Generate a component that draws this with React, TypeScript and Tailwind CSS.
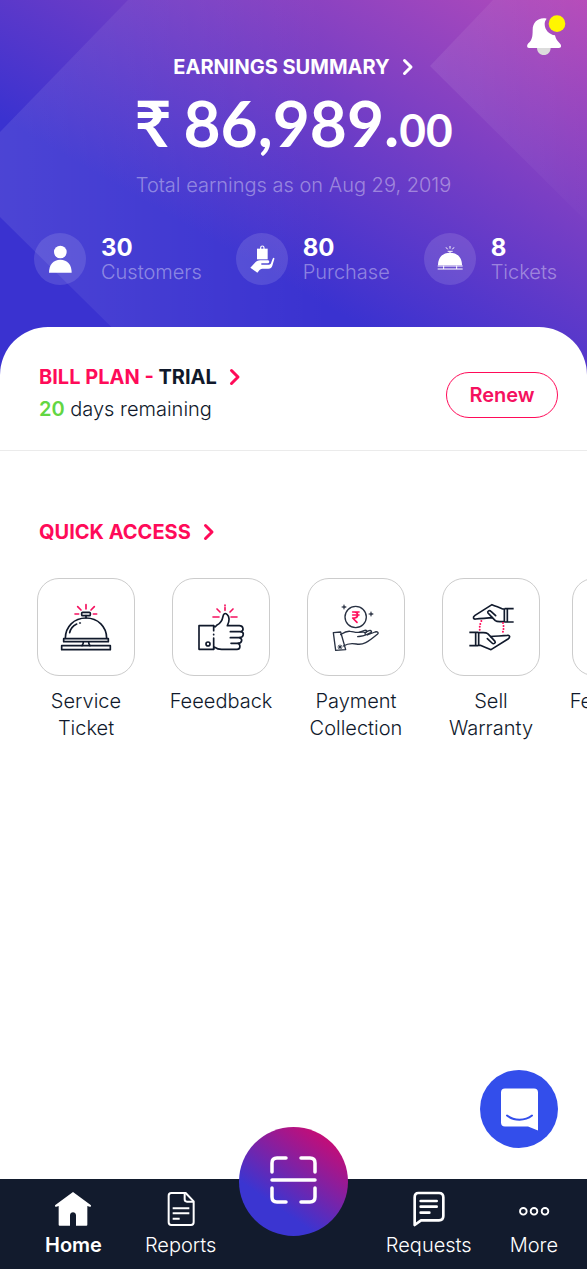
import type { ReactNode } from "react";

function Chevron() {
  return (
    <svg viewBox="0 0 12 18" className="h-[18px] w-3" fill="none" stroke="currentColor" strokeWidth="3" aria-hidden="true">
      <path d="M2.5 2.5 9 9l-6.500 6.500" strokeLinecap="round" strokeLinejoin="round" />
    </svg>
  );
}

function HeaderBackdrop() {
  return (
    <svg viewBox="0 0 587 375" preserveAspectRatio="none" className="absolute inset-0 h-full w-full" aria-hidden="true">
      <defs>
        <linearGradient id="sheenLeft" x1="0" x2="1" y1="0" y2="0">
          <stop offset="0" stopColor="#fff" stopOpacity="0.09" />
          <stop offset="1" stopColor="#fff" stopOpacity="0" />
        </linearGradient>
        <linearGradient id="sheenRight" x1="0" x2="1" y1="0" y2="0">
          <stop offset="0" stopColor="#fff" stopOpacity="0.08" />
          <stop offset="1" stopColor="#fff" stopOpacity="0.01" />
        </linearGradient>
      </defs>
      <path d="M128 0H330V375H160L0 217V132Z" fill="url(#sheenLeft)" />
      <path d="M493 0 430 66 587 222V0Z" fill="url(#sheenRight)" />
    </svg>
  );
}

function NotificationBell() {
  return (
    <svg viewBox="78 45 120 120" className="size-10" aria-hidden="true">
      <path d="M111 143h41c0 13-9 22-20.500 22S111 156 111 143Z" fill="#dcdcdc" />
      <path
        d="M140 56c-3-1-6-1-9-1-20 0-33 15-33 34 0 22-2 31-13 41-5 5-5 14 2 14h90c8 0 8-9 2-14-8-8-12-14-14-24-17-2-31-16-31-34 0-6 2-11 6-16Z"
        fill="#fff"
      />
      <circle cx="171" cy="71" r="25" fill="#fff500" />
    </svg>
  );
}

function CustomerIcon() {
  return (
    <svg viewBox="41 40 156 156" className="size-full" fill="#fff" aria-hidden="true">
      <circle cx="120" cy="97" r="19" />
      <path d="M86 159c0-24 13-39 34-39s34 15 34 39Z" />
    </svg>
  );
}

function PurchaseIcon() {
  return (
    <svg viewBox="645 40 156 156" className="size-full" fill="#fff" aria-hidden="true">
      <path d="M719 90v-6a5 5 0 0 1 10 0v6" fill="none" stroke="#fff" strokeWidth="3.500" />
      <path d="M708 87h32v32h-32Z" />
      <path d="m688 144 16-17c5-5 12-5 19-5h18c5 0 5 9 0 9h-20v4h22c5 0 7-3 8-7l4-11c2-4 6-4 5 1l-6 20c-2 6-5 9-12 9h-18c-5 0-8 3-10 6l-5 6Z" />
    </svg>
  );
}

function TicketIcon() {
  return (
    <svg viewBox="377 40 156 156" className="size-full" fill="none" stroke="#fff" strokeWidth="4" aria-hidden="true">
      <path d="M419 137c0-25 15-38 36-38s36 13 36 38Z" fill="#fff" stroke="none" />
      <path d="M448 95h15M455 95v6M455 79v8M443 83l5 6M467 83l-5 6" strokeWidth="3" />
      <path d="M418 139h75M418 148h75M436 138v10M475 138v10" strokeWidth="3" />
    </svg>
  );
}

function ServiceTicketIcon() {
  return (
    <svg viewBox="24 27 288 288" className="size-full" fill="none" stroke="#10192b" strokeWidth="5" strokeLinecap="round" strokeLinejoin="round" aria-hidden="true">
      <path d="M106 205c0-35 26-61 62-61s62 26 62 61" />
      <path d="M101 206h134v9H101ZM95 227h146v12H95Z" />
      <path d="M160 216c0 5-2 9-4 11M176 216c0 5 2 9 4 11" />
      <rect x="155" y="127" width="26" height="10" rx="3" />
      <path d="M168 137v7M119 188c2-11 9-20 21-26M149 159h2" />
      <path d="M168 104v13M143 110l10 10M193 110l-10 10M135 132h11M190 132h10" stroke="#f5115f" />
    </svg>
  );
}

function FeedbackIcon() {
  return (
    <svg viewBox="429 27 288 288" className="size-full" fill="none" stroke="#10192b" strokeWidth="5" strokeLinecap="round" strokeLinejoin="round" aria-hidden="true">
      <path d="M551 167h-44v71h44c0-5 1-8 4-6 7 6 14 6 20 6h46c11 0 11-14 3-18 12 0 15-13 5-17 12-1 15-15 4-18 10-3 7-18-5-18h-36c7-13 7-28-1-34-7-6-11 0-12 6-2 12-9 22-19 27-4 3-4 8-9 1Z" />
      <path d="M551 167v15M551 193v1M551 204v34M601 185h30M601 203h29M603 220h22" />
      <circle cx="534" cy="222" r="6" />
      <path d="M585 105v2M585 113v8M561 117l9 9M609 117l-9 9M549 141h18M603 141h18" stroke="#f5115f" />
    </svg>
  );
}

function PaymentIcon() {
  return (
    <svg viewBox="56 27 288 288" className="size-full" fill="none" stroke="#283142" strokeWidth="4" strokeLinecap="round" strokeLinejoin="round" aria-hidden="true">
      <circle cx="199" cy="141" r="32" />
      <path d="M190 126h19M190 135h19M190 126h5c13 0 13 18 0 18h-5l13 13" stroke="#ff0b59" strokeWidth="5" />
      <path d="M164 105v12M158 111h12M245 126v12M239 132h12" strokeWidth="3" />
      <circle cx="164" cy="111" r="3" strokeWidth="2" />
      <circle cx="245" cy="132" r="3" strokeWidth="2" />
      <path d="m132 188 22-2 15 53-30 2Z" />
      <path d="M154 194c9-6 16-12 29-10 10 1 14 4 26 3 12-2 20-1 19 6 0 6-12 5-23 7" />
      <path d="M162 228c13-8 24-9 39-6 20 4 34-5 63-29 6-6 0-9-7-7l-23 9M209 187l17-6c6-1 10 3 3 7M228 187l11-5c7-2 10 3 5 6l-15 7" />
      <path d="M152 225v12M146 231h12M148 227l8 8M156 227l-8 8" strokeWidth="3" />
    </svg>
  );
}

function WarrantyHand() {
  return (
    <g fill="none" stroke="#111a2c" strokeWidth="5" strokeLinecap="round" strokeLinejoin="round">
      <path d="M645 117h-5c-13-5-21-9-32-13l-51 32c-8 6-5 12 2 11 18-2 36-2 50-4l9 9c4 3 7 3 13 3h14" />
      <path d="m619 137-14-13c-5-5-12 0-9 5l13 14" />
      <path d="M645 116v40M654 116v40M646 116h27M646 156h27" strokeLinecap="butt" />
    </g>
  );
}

function WarrantyIcon() {
  return (
    <svg viewBox="461 27 288 288" className="size-full" aria-hidden="true">
      <WarrantyHand />
      <g transform="rotate(180 606.500 171.500)">
        <WarrantyHand />
      </g>
      <path d="M576 153c-5 11-6 21-4 33M641 159c3 12 2 22-3 35" fill="none" stroke="#ff0b59" strokeWidth="6" strokeLinecap="round" strokeDasharray="0 9" />
    </svg>
  );
}

function HomeIcon() {
  return (
    <svg viewBox="77 32 108 108" className="size-9" fill="#fff" aria-hidden="true">
      <path d="M131 35 78 74c-4 4-1 6 3 5l7-2v56c0 2 1 3 3 3h31v-31c0-12 18-12 18 0v31h31c2 0 3-1 3-3V77l7 2c4 1 7-1 3-5Z" />
    </svg>
  );
}

function ReportsIcon() {
  return (
    <svg viewBox="393 32 108 108" className="size-9" fill="none" stroke="#fff" strokeWidth="6" strokeLinejoin="round" aria-hidden="true">
      <path d="M418 38h43l24 25v63c0 6-2 8-8 8h-59c-6 0-8-2-8-8V46c0-6 2-8 8-8Z" />
      <path d="M458 39v18c0 5 2 7 7 7h19" />
      <path d="M422 84h50M422 99h50M422 115h21" />
    </svg>
  );
}

function RequestsIcon() {
  return (
    <svg viewBox="103 32 108 108" className="size-9" fill="none" stroke="#fff" strokeWidth="8" strokeLinejoin="round" aria-hidden="true">
      <path d="M125 38h62c9 0 13 4 13 13v56c0 9-4 13-13 13h-54l-19 14V51c0-9 3-13 11-13Z" />
      <path d="M132 62h48M132 79h48M132 97h26" strokeLinecap="round" />
    </svg>
  );
}

function MoreIcon() {
  return (
    <svg viewBox="409 32 108 108" className="size-9" fill="none" stroke="#fff" strokeWidth="5.500" aria-hidden="true">
      <circle cx="431" cy="93" r="10" />
      <circle cx="463" cy="93" r="10" />
      <circle cx="496" cy="93" r="10" />
    </svg>
  );
}

function ScanIcon() {
  return (
    <svg viewBox="0 0 109 109" className="size-full" fill="none" stroke="#fff" strokeWidth="3.500" strokeLinecap="round" aria-hidden="true">
      <path d="M33 45v-9c0-4 2-5 5-5h9M62 31h9c4 0 5 2 5 5v9M76 61v9c0 4-2 5-5 5h-9M47 75h-9c-4 0-5-2-5-5v-9M33 53h43" />
    </svg>
  );
}

function ChatIcon() {
  return (
    <svg viewBox="0 0 78 78" className="size-full" aria-hidden="true">
      <path d="M25 18.500h29a4 4 0 0 1 4 4V60.500l-10-4H25a4 4 0 0 1-4-4v-30a4 4 0 0 1 4-4Z" fill="#fff" />
      <path d="M27 45.500c7 5.500 18 5.500 25 0" fill="none" stroke="#334eeb" strokeWidth="2" strokeLinecap="round" />
    </svg>
  );
}

function Stat({ icon, value, label }: { icon: ReactNode; value: string; label: string }) {
  return (
    <a href="#" className="flex items-center gap-[15px]">
      <span className="size-[52px] rounded-full bg-white/12">{icon}</span>
      <span className="flex flex-col">
        <span className="text-[24px] leading-[25px] font-bold">{value}</span>
        <span className="text-[20px] leading-6 font-light text-white/40">{label}</span>
      </span>
    </a>
  );
}

function Tile({ icon, label }: { icon?: ReactNode; label: string }) {
  return (
    <a href="#" className="flex w-[98px] shrink-0 flex-col items-center gap-3">
      <span className="size-[98px] rounded-[22px] border border-[#cccccc]">{icon}</span>
      <span className="text-center text-[20px] leading-[27px] font-light text-[#10192b]">{label}</span>
    </a>
  );
}

function NavItem({ icon, label, active = false }: { icon: ReactNode; label: string; active?: boolean }) {
  return (
    <a href="#" aria-current={active ? "page" : undefined} className="flex flex-col items-center gap-[6px]">
      {icon}
      <span className={active ? "text-[20px] leading-6 font-semibold" : "text-[20px] leading-6 font-light"}>{label}</span>
    </a>
  );
}

export default function App() {
  return (
    <div className="flex min-h-screen flex-col overflow-x-hidden bg-white font-['Inter','Liberation_Sans',sans-serif] text-[#10192b]">
      <header className="relative bg-[linear-gradient(30deg,#3a32d0_0%,#3a32d0_36%,#b64bb9_100%)] pt-[53px] pb-[90px] text-white">
        <HeaderBackdrop />
        <button type="button" aria-label="Notifications" className="absolute top-[15px] right-[21px]">
          <NotificationBell />
        </button>
        <div className="relative flex flex-col items-center">
          <a href="#" className="flex items-center gap-3 text-[20px] leading-7 font-bold">
            <h1>EARNINGS SUMMARY</h1>
            <Chevron />
          </a>
          <p className="mt-[10px] flex h-16 items-baseline font-['Lato','Inter',sans-serif] text-[64px] leading-[64px] font-bold">
            <span className="mr-3">₹</span>
            <span>86,989.</span>
            <span className="text-[46px]">00</span>
          </p>
          <p className="mt-[18px] text-[20px] leading-6 font-light text-white/40">Total earnings as on Aug 29, 2019</p>
        </div>
        <div className="relative mt-9 flex items-center justify-between pr-[30px] pl-[34px]">
          <Stat icon={<CustomerIcon />} value="30" label="Customers" />
          <Stat icon={<PurchaseIcon />} value="80" label="Purchase" />
          <Stat icon={<TicketIcon />} value="8" label="Tickets" />
        </div>
      </header>

      <main className="relative -mt-12 flex-1 rounded-t-[48px] bg-white">
        <section className="flex items-center justify-between border-b border-[#ebebeb] pt-9 pr-[29px] pb-[27px] pl-[39px]">
          <div className="flex flex-col gap-1">
            <a href="#" className="flex items-center gap-3 text-[20px] leading-7 font-bold text-[#ff0b59]">
              <h2>
                BILL PLAN - <span className="text-[#10192b]">TRIAL</span>
              </h2>
              <Chevron />
            </a>
            <p className="text-[20px] leading-7 font-light">
              <span className="font-semibold text-[#62d643]">20</span> days remaining
            </p>
          </div>
          <button type="button" className="mt-1 h-[46px] w-28 rounded-full border border-[#ff0b59] text-[20px] font-semibold text-[#f5115f]">
            Renew
          </button>
        </section>

        <section className="pt-[67px]">
          <a href="#" className="ml-[39px] inline-flex items-center gap-3 text-[20px] leading-7 font-bold text-[#ff0b59]">
            <h2>QUICK ACCESS</h2>
            <Chevron />
          </a>
          <div className="mt-8 flex gap-8 overflow-x-hidden pl-[37px]">
            <div className="flex shrink-0 gap-[37px]">
              <Tile icon={<ServiceTicketIcon />} label="Service Ticket" />
              <Tile icon={<FeedbackIcon />} label="Feeedback" />
              <Tile icon={<PaymentIcon />} label="Payment Collection" />
              <Tile icon={<WarrantyIcon />} label="Sell Warranty" />
            </div>
            <div className="flex shrink-0 gap-[37px]">
              <Tile label="Feeedback" />
            </div>
          </div>
        </section>
      </main>

      <footer className="sticky bottom-0">
        <button type="button" aria-label="Chat with support" className="absolute right-[29px] bottom-[121px] size-[78px] rounded-full bg-[#334eeb]">
          <ChatIcon />
        </button>
        <nav className="flex justify-between bg-[#121b2d] pt-3 pr-[29px] pb-3 pl-[45px] text-white">
          <div className="flex gap-[43px]">
            <NavItem icon={<HomeIcon />} label="Home" active />
            <NavItem icon={<ReportsIcon />} label="Reports" />
          </div>
          <div className="flex gap-[38px]">
            <NavItem icon={<RequestsIcon />} label="Requests" />
            <NavItem icon={<MoreIcon />} label="More" />
          </div>
        </nav>
        <div className="absolute inset-x-0 bottom-[33px] flex justify-center">
          <button
            type="button"
            aria-label="Scan code"
            className="size-[109px] rounded-full bg-[linear-gradient(35deg,#3b35d1_0%,#3b35d1_30%,#c80c74_88%)]"
          >
            <ScanIcon />
          </button>
        </div>
      </footer>
    </div>
  );
}
